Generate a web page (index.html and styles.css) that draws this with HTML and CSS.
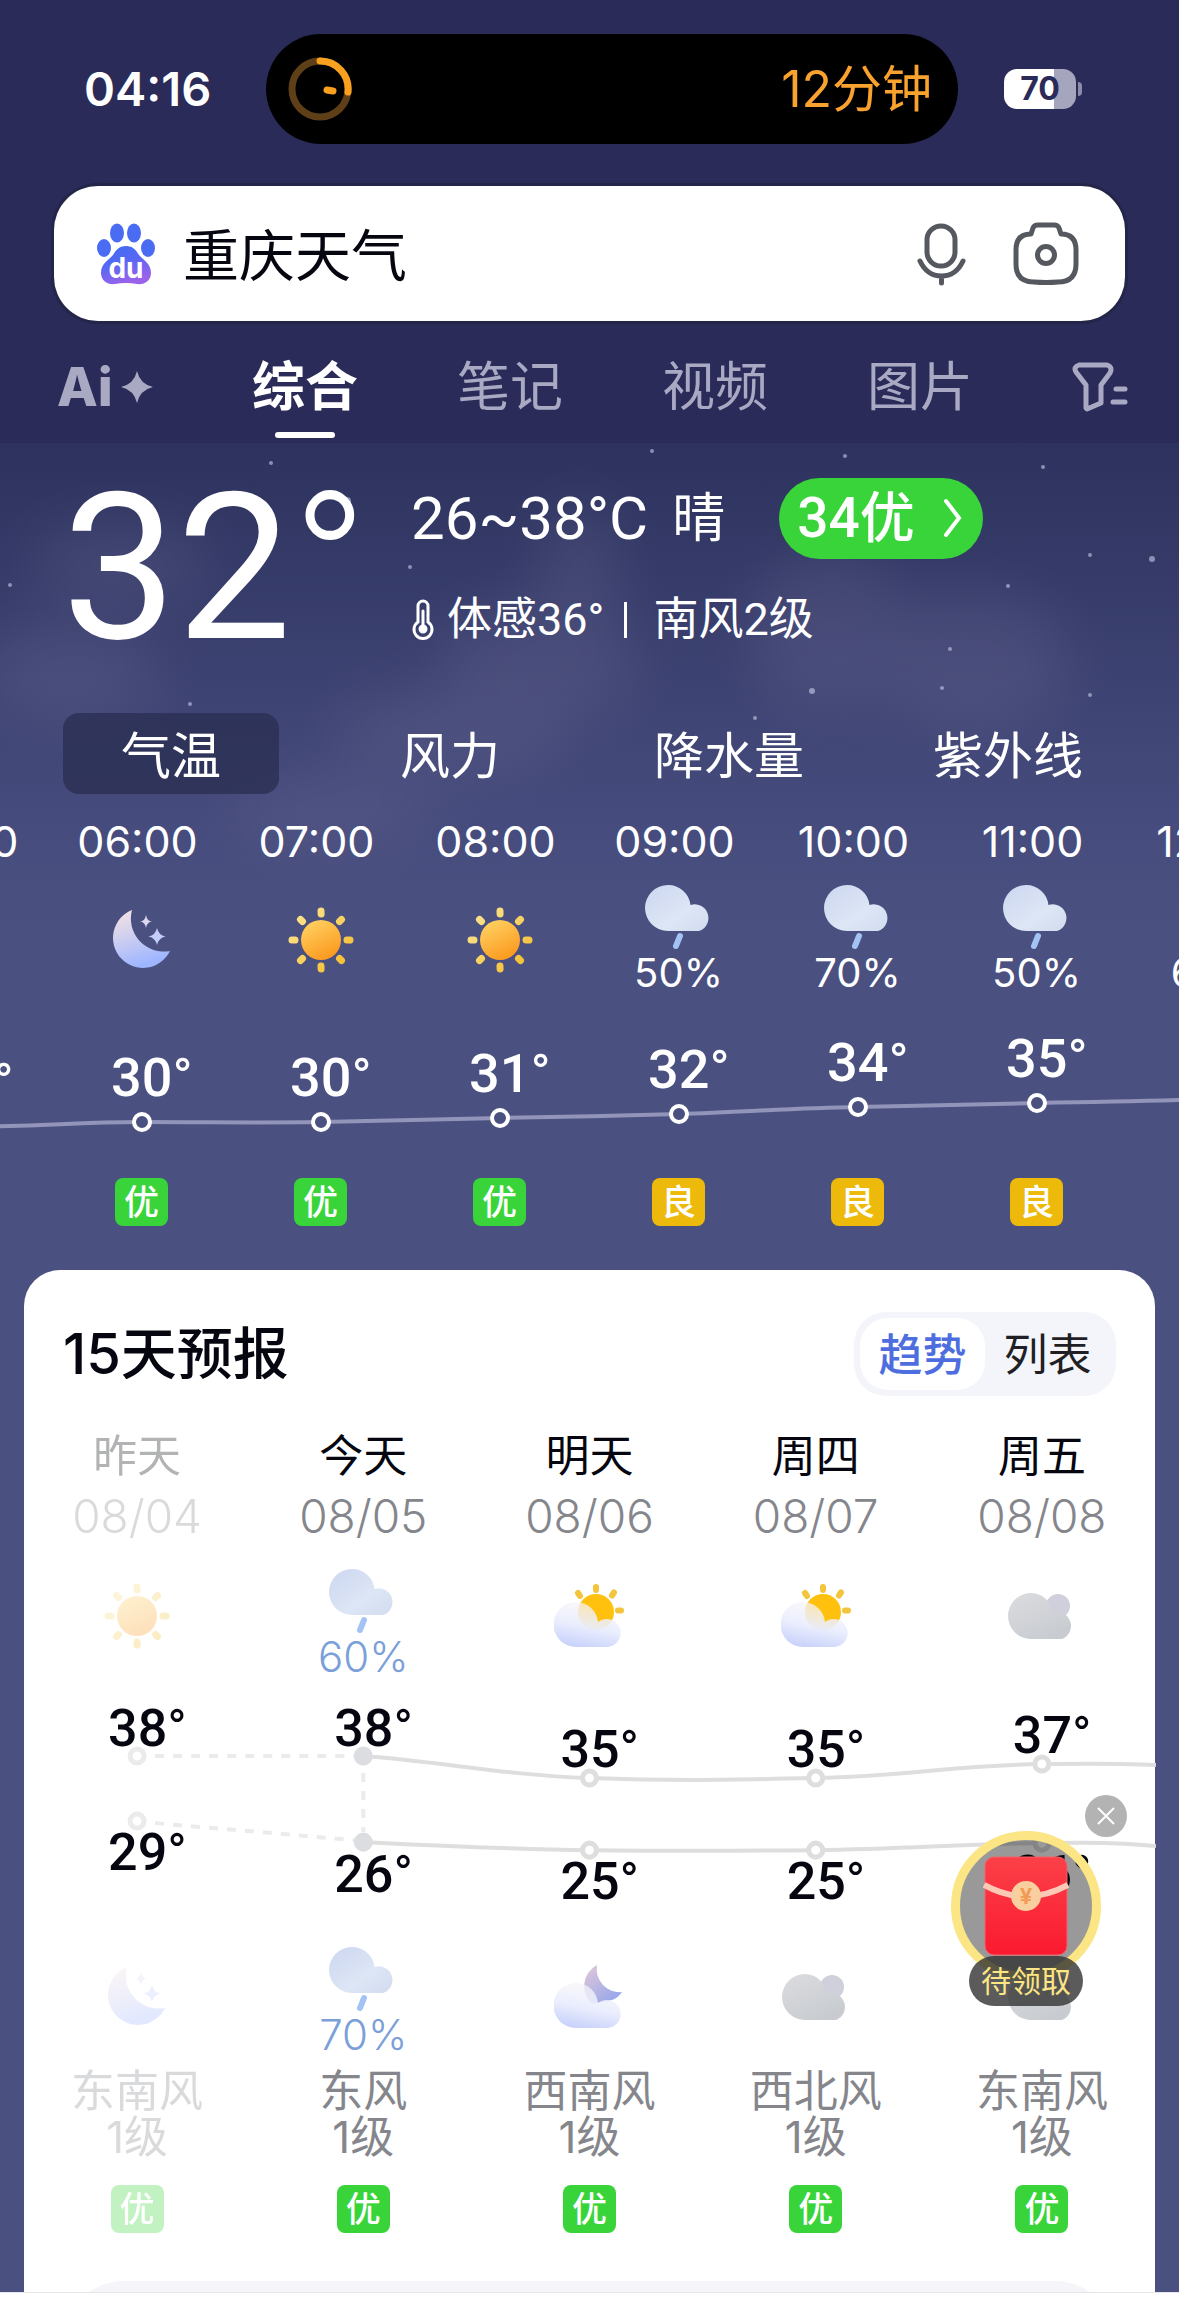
FILE: index.html
```html
<!DOCTYPE html>
<html lang="zh-CN">
<head>
    <meta charset="UTF-8">
    <meta name="viewport" content="width=device-width, initial-scale=1.0">
    <title>重庆天气</title>
    <link rel="stylesheet" href="styles.css">
</head>
<body>
    <!-- Shared weather icons -->
    <svg class="sprite" aria-hidden="true">
        <defs>
            <linearGradient id="g-sun" x1="0" y1="0" x2="0.5" y2="1"><stop offset="0" stop-color="#ffd768"/><stop offset="1" stop-color="#fb9c22"/></linearGradient>
            <linearGradient id="g-ray" x1="0" y1="0" x2="1" y2="1"><stop offset="0" stop-color="#fbe596"/><stop offset="1" stop-color="#f3bd2c"/></linearGradient>
            <linearGradient id="g-moon" x1="0" y1="0" x2="0.3" y2="1"><stop offset="0" stop-color="#f6e2e2"/><stop offset="0.45" stop-color="#d3d1ef"/><stop offset="1" stop-color="#9fb6ff"/></linearGradient>
            <linearGradient id="g-rain" x1="0" y1="0" x2="1" y2="1"><stop offset="0" stop-color="#ccd6f0"/><stop offset="0.6" stop-color="#dde6f5"/><stop offset="1" stop-color="#d3dcf0"/></linearGradient>
            <linearGradient id="g-soft" x1="0.5" y1="0" x2="0.2" y2="1"><stop offset="0" stop-color="#f7f5f8" stop-opacity="0.7"/><stop offset="0.5" stop-color="#e9edfd" stop-opacity="0.95"/><stop offset="1" stop-color="#c5cffb"/></linearGradient>
            <linearGradient id="g-gray" x1="0" y1="0" x2="0.6" y2="1"><stop offset="0" stop-color="#dcdcdf"/><stop offset="1" stop-color="#c8ccd1"/></linearGradient>
            <linearGradient id="g-dusk" x1="0" y1="0" x2="0.8" y2="1"><stop offset="0" stop-color="#e3c9d8"/><stop offset="1" stop-color="#93a5ec"/></linearGradient>
            <linearGradient id="g-paw" x1="0" y1="0" x2="0.4" y2="1"><stop offset="0" stop-color="#3f6cf3"/><stop offset="0.5" stop-color="#5668f4"/><stop offset="1" stop-color="#9a63ea"/></linearGradient>
            <linearGradient id="g-packet" x1="0" y1="0" x2="0" y2="1"><stop offset="0" stop-color="#fb4048"/><stop offset="1" stop-color="#fb1a30"/></linearGradient>
        </defs>
        <symbol id="sun" viewBox="0 0 66 66">
            <g stroke="url(#g-ray)" stroke-width="7" stroke-linecap="round">
                <path d="M33 4l.1 3M33 59l.1 3M4 33l3 .1M59 33l3 .1M12.500 12.500l2 2M51.500 51.500l2 2M53.500 12.500l-2 2M14.500 51.500l-2 2"/>
            </g>
            <circle cx="33" cy="33" r="20" fill="url(#g-sun)"/>
        </symbol>
        <symbol id="moon" viewBox="0 0 60 60">
            <path fill="url(#g-moon)" d="M20 0A30 30 0 1 0 58 41A33 33 0 0 1 20 0z"/>
            <path fill="#dcd7f0" d="M34 5q1 6 6 6.500q-5 .5-6 6.500q-1-6-6-6.500q5-.5 6-6.500z"/>
            <path fill="#c3cdfa" d="M45 18q1.500 7 8.500 8.500q-7 1.500-8.500 8.500q-1.500-7-8.500-8.500q7-1.500 8.500-8.500z"/>
        </symbol>
        <symbol id="rain" viewBox="0 0 68 66">
            <path fill="url(#g-rain)" d="M23 1a22.500 22.500 0 0 1 22.500 20A13.500 13.500 0 1 1 54 47H23A23 23 0 0 1 23 1z"/>
            <path stroke="#a3c3f5" stroke-width="6" stroke-linecap="round" d="M35 52l-4 10"/>
        </symbol>
        <symbol id="partly" viewBox="0 0 70 66">
            <g stroke="#f3c53c" stroke-width="6" stroke-linecap="round">
                <path d="M42 4v3M60 9.500l-2 3M64 27.500h3M24 10l2 3"/>
            </g>
            <circle cx="42" cy="29" r="18" fill="#ffc10e"/>
            <path fill="url(#g-soft)" d="M22 19a22 22 0 0 1 22 20A14 14 0 1 1 53 64H22A22.500 22.500 0 0 1 22 19z"/>
        </symbol>
        <symbol id="cloudmoon" viewBox="0 0 70 66">
            <path fill="url(#g-dusk)" d="M43 1A24 24 0 0 0 38 40L58 36Q65 33 68 28A23 23 0 0 1 43 1z"/>
            <path fill="url(#g-soft)" d="M22 19a22 22 0 0 1 22 20A14 14 0 1 1 53 64H22A22.500 22.500 0 0 1 22 19z"/>
        </symbol>
        <symbol id="cloudy" viewBox="0 0 68 48">
            <circle cx="50" cy="14" r="12" fill="#cfd0dc"/>
            <path fill="url(#g-gray)" d="M23 1a21 21 0 0 1 21 20A13.500 13.500 0 1 1 54 47H23A23 23 0 0 1 23 1z"/>
        </symbol>
    </svg>

    <header class="top">
        <div class="status">
            <span class="clock">04:16</span>
            <div class="island">
                <svg width="64" height="64" viewBox="0 0 64 64" fill="none" stroke-width="7">
                    <circle cx="32" cy="32" r="28" stroke="#5e3f17"/>
                    <path d="M32 4a28 28 0 0 1 28 31M39 33l6 1" stroke="#f9a01f" stroke-linecap="round"/>
                </svg>
                <span>12分钟</span>
            </div>
            <span class="battery">70</span>
        </div>

        <form class="search" role="search">
            <svg width="58" height="62" viewBox="0 0 58 62" fill="url(#g-paw)">
                <ellipse cx="20" cy="10" rx="7" ry="9.500" fill="#4a6cf3"/>
                <ellipse cx="37" cy="10" rx="7" ry="9.500" fill="#4a6cf3"/>
                <ellipse cx="7" cy="25" rx="7" ry="9" fill="#4a6cf3"/>
                <ellipse cx="51" cy="25" rx="7" ry="9" fill="#4a6cf3"/>
                <path d="M29 23c7 0 10 4 13 9c4 5 12 8 12 18c0 8-7 12-14 11c-7-1.500-15-1.500-22 0c-7 1-14-3-14-11c0-10 8-13 12-18c3-5 6-9 13-9z"/>
                <text x="29" y="55" class="paw-text">du</text>
            </svg>
            <input type="search" aria-label="搜索" value="重庆天气">
            <button type="button" aria-label="语音搜索">
                <svg width="50" height="64" viewBox="0 0 50 64" fill="none" stroke="#55585f" stroke-width="5" stroke-linecap="round">
                    <rect x="10" y="4" width="28" height="40" rx="14"/>
                    <path d="M3 39q7 15 21.500 15T46 39M24.500 54v7"/>
                </svg>
            </button>
            <button type="button" aria-label="拍照搜索">
                <svg width="66" height="64" viewBox="0 0 66 64" fill="none" stroke="#55585f" stroke-width="5" stroke-linejoin="round">
                    <path d="M18 12L20 6Q21 3 25 3H41Q45 3 46 6L48 12Q63 12 63 28V42Q63 60 45 60Q33 61 21 60Q3 60 3 42V28Q3 12 18 12z"/>
                    <circle cx="33" cy="33" r="8.500"/>
                </svg>
            </button>
        </form>

        <nav class="channels">
            <a href="#" class="ai">Ai<svg width="32" height="32" viewBox="0 0 32 32"><path fill="currentColor" d="M16 0q3 13 16 16q-13 3-16 16q-3-13-16-16q13-3 16-16z"/></svg></a>
            <a href="#" class="active">综合</a>
            <a href="#">笔记</a>
            <a href="#">视频</a>
            <a href="#">图片</a>
            <button type="button" aria-label="筛选">
                <svg width="57" height="52" viewBox="0 0 57 52" fill="none" stroke="currentColor" stroke-width="5" stroke-linecap="round" stroke-linejoin="round">
                    <path d="M7 4H35Q41 6 38 12L29 24V42L15 48L14 47V24L4 11Q1 6 7 4zM44 28h9M41 41h12"/>
                </svg>
            </button>
        </nav>
    </header>

    <main class="weather">
        <svg class="sky" viewBox="0 0 1179 460" preserveAspectRatio="xMidYMin slice" aria-hidden="true">
            <defs><filter id="haze" x="-50%" y="-50%" width="200%" height="200%"><feGaussianBlur stdDeviation="28"/></filter></defs>
            <g fill="#8a84ac" opacity="0.18" filter="url(#haze)">
                <ellipse cx="120" cy="120" rx="90" ry="40"/>
                <ellipse cx="70" cy="230" rx="90" ry="50"/>
                <ellipse cx="580" cy="130" rx="40" ry="70"/>
                <ellipse cx="540" cy="220" rx="100" ry="60"/>
                <ellipse cx="450" cy="290" rx="120" ry="40"/>
                <ellipse cx="830" cy="190" rx="80" ry="80"/>
                <ellipse cx="970" cy="220" rx="100" ry="70"/>
                <ellipse cx="330" cy="370" rx="100" ry="30"/>
            </g>
            <g fill="#c8cbe8" opacity="0.6">
                <circle cx="347" cy="58" r="4"/><circle cx="271" cy="20" r="2"/><circle cx="652" cy="8" r="2"/><circle cx="845" cy="13" r="2"/>
                <circle cx="1043" cy="24" r="2"/><circle cx="1152" cy="116" r="3"/><circle cx="1090" cy="112" r="2"/><circle cx="812" cy="248" r="3"/>
                <circle cx="950" cy="206" r="2"/><circle cx="942" cy="245" r="2"/><circle cx="1090" cy="252" r="2"/><circle cx="190" cy="261" r="2"/>
                <circle cx="410" cy="124" r="2"/><circle cx="755" cy="275" r="2"/><circle cx="10" cy="142" r="2"/><circle cx="1008" cy="143" r="2"/>
            </g>
        </svg>

        <section class="now">
            <div class="now-temp">32<span>°</span></div>
            <div class="now-info">
                <div class="summary">
                    <span class="range">26~38°C</span>
                    <span>晴</span>
                    <a href="#" class="aqi">34优<svg width="20" height="40" viewBox="0 0 20 40" fill="none" stroke="#fff" stroke-width="4" stroke-linecap="round"><path d="M3 3l13 17L3 37"/></svg></a>
                </div>
                <div class="feel">
                    <svg width="24" height="42" viewBox="0 0 24 42" fill="none" stroke="#fff" stroke-width="3" stroke-linecap="round">
                        <path d="M7 23V7a5 5 0 0 1 10 0V23a9 9 0 1 1-10 0z"/>
                        <path d="M12 12v16"/><circle cx="12" cy="30" r="3" fill="#fff"/>
                    </svg>
                    <span>体感36°</span>
                    <i></i>
                    <span>南风2级</span>
                </div>
            </div>
        </section>

        <div class="metrics">
            <button type="button" class="active">气温</button>
            <button type="button">风力</button>
            <button type="button">降水量</button>
            <button type="button">紫外线</button>
        </div>

        <section class="hourly">
            <div class="strip">
                <div class="hours">
                    <div><time>05:00</time><div class="icon"><svg width="60" height="60"><use href="#moon"/></svg></div></div>
                    <div><time>06:00</time><div class="icon"><svg width="60" height="60"><use href="#moon"/></svg></div></div>
                    <div><time>07:00</time><div class="icon"><svg width="66" height="66"><use href="#sun"/></svg></div></div>
                    <div><time>08:00</time><div class="icon"><svg width="66" height="66"><use href="#sun"/></svg></div></div>
                    <div><time>09:00</time><div class="icon"><svg width="68" height="66"><use href="#rain"/></svg><span>50%</span></div></div>
                    <div><time>10:00</time><div class="icon"><svg width="68" height="66"><use href="#rain"/></svg><span>70%</span></div></div>
                    <div><time>11:00</time><div class="icon"><svg width="68" height="66"><use href="#rain"/></svg><span>50%</span></div></div>
                    <div><time>12:00</time><div class="icon"><svg width="68" height="66"><use href="#rain"/></svg><span>60%</span></div></div>
                </div>
                <svg class="hour-chart" width="1432" height="120" viewBox="0 0 1432 120">
                    <path class="line" d="M90 97C180 96 200 92 269 92S380 93 448 92S560 89 627 88S740 86 806 84S920 78 985 77S1100 74 1164 73S1280 71 1343 69"/>
                    <g class="dots">
                        <circle cx="90" cy="97" r="8"/><circle cx="269" cy="92" r="8"/><circle cx="448" cy="92" r="8"/><circle cx="627" cy="88" r="8"/>
                        <circle cx="806" cy="84" r="8"/><circle cx="985" cy="77" r="8"/><circle cx="1164" cy="73" r="8"/><circle cx="1343" cy="69" r="8"/>
                    </g>
                    <g class="labels">
                        <text x="59" y="71">29<tspan>°</tspan></text><text x="238" y="66">30<tspan>°</tspan></text>
                        <text x="417" y="66">30<tspan>°</tspan></text><text x="596" y="62">31<tspan>°</tspan></text>
                        <text x="775" y="58">32<tspan>°</tspan></text><text x="954" y="51">34<tspan>°</tspan></text>
                        <text x="1133" y="47">35<tspan>°</tspan></text><text x="1312" y="43">36<tspan>°</tspan></text>
                    </g>
                </svg>
                <div class="hours">
                    <div><b class="tag">优</b></div>
                    <div><b class="tag">优</b></div>
                    <div><b class="tag">优</b></div>
                    <div><b class="tag">优</b></div>
                    <div><b class="tag fair">良</b></div>
                    <div><b class="tag fair">良</b></div>
                    <div><b class="tag fair">良</b></div>
                    <div><b class="tag fair">良</b></div>
                </div>
            </div>
        </section>

        <section class="card">
            <div class="card-head">
                <h2>15天预报</h2>
                <div class="switch">
                    <button type="button" class="active">趋势</button>
                    <button type="button">列表</button>
                </div>
            </div>

            <div class="days">
                <div class="past"><h3>昨天</h3><time>08/04</time><div class="icon"><svg width="66" height="66"><use href="#sun"/></svg></div></div>
                <div><h3>今天</h3><time>08/05</time><div class="icon wet"><svg width="68" height="66"><use href="#rain"/></svg><span>60%</span></div></div>
                <div><h3>明天</h3><time>08/06</time><div class="icon"><svg width="70" height="66"><use href="#partly"/></svg></div></div>
                <div><h3>周四</h3><time>08/07</time><div class="icon"><svg width="70" height="66"><use href="#partly"/></svg></div></div>
                <div><h3>周五</h3><time>08/08</time><div class="icon"><svg width="68" height="48"><use href="#cloudy"/></svg></div></div>
            </div>

            <svg class="day-chart" viewBox="0 0 1130 200">
                <path class="dashed" d="M131 56H330M131 123L330 140M339 73V132"/>
                <path class="line" d="M339 56C420 62 480 75 565 78S700 80 791 78S930 65 1017 64S1100 64 1131 65"/>
                <path class="line" d="M339 142C420 146 480 149 565 150S700 151 791 150S930 144 1017 143S1100 144 1131 146"/>
                <g class="dots">
                    <circle class="old" cx="113" cy="56" r="7"/><circle class="today" cx="339" cy="56" r="7"/><circle cx="565" cy="78" r="7"/><circle cx="791" cy="78" r="7"/><circle cx="1017" cy="64" r="7"/>
                    <circle class="old" cx="113" cy="121" r="7"/><circle class="today" cx="339" cy="142" r="7"/><circle cx="565" cy="150" r="7"/><circle cx="791" cy="150" r="7"/><circle cx="1017" cy="143" r="7"/>
                </g>
                <g class="labels">
                    <text x="84" y="46">38<tspan>°</tspan></text><text x="310" y="46">38<tspan>°</tspan></text><text x="536" y="67">35<tspan>°</tspan></text><text x="762" y="67">35<tspan>°</tspan></text><text x="988" y="53">37<tspan>°</tspan></text>
                    <text x="84" y="170">29<tspan>°</tspan></text><text x="310" y="192">26<tspan>°</tspan></text><text x="536" y="199">25<tspan>°</tspan></text><text x="762" y="199">25<tspan>°</tspan></text><text x="988" y="192">26<tspan>°</tspan></text>
                </g>
            </svg>

            <div class="days nights">
                <div class="past"><div class="icon"><svg width="60" height="60"><use href="#moon"/></svg></div><p>东南风<br>1级</p><b class="tag">优</b></div>
                <div><div class="icon wet"><svg width="68" height="66"><use href="#rain"/></svg><span>70%</span></div><p>东风<br>1级</p><b class="tag">优</b></div>
                <div><div class="icon"><svg width="70" height="66"><use href="#cloudmoon"/></svg></div><p>西南风<br>1级</p><b class="tag">优</b></div>
                <div><div class="icon"><svg width="68" height="48"><use href="#cloudy"/></svg></div><p>西北风<br>1级</p><b class="tag">优</b></div>
                <div><div class="icon"><svg width="68" height="48"><use href="#cloudy"/></svg></div><p>东南风<br>1级</p><b class="tag">优</b></div>
            </div>

            <div class="more"><div></div></div>

            <!-- Floating red packet -->
            <aside class="packet">
                <button type="button" class="close" aria-label="关闭"><svg width="18" height="18" viewBox="0 0 18 18" stroke="#fff" stroke-width="2"><path d="M1 1l16 16M17 1L1 17"/></svg></button>
                <a href="#" class="ring" aria-label="红包">
                    <svg width="86" height="100" viewBox="0 0 86 100">
                        <rect x="2" y="1" width="82" height="98" rx="9" fill="url(#g-packet)" stroke="#f0656b" stroke-width="1"/>
                        <path d="M1 29Q43 52 85 29" fill="none" stroke="#fbc9b6" stroke-width="6"/>
                        <circle cx="43" cy="40" r="15" fill="#f9cf9f"/>
                        <text x="43" y="48" class="yen">¥</text>
                    </svg>
                </a>
                <span>待领取</span>
            </aside>
        </section>
    </main>
    <footer class="bottom"></footer>
</body>
</html>
```
FILE: styles.css
```css
* {
    box-sizing: border-box;
}
body {
    margin: 0;
    background: #fff;
    color: #fff;
    font-family: Inter, "Noto Sans CJK SC", sans-serif;
    overflow-x: hidden;
}
a {
    color: inherit;
    text-decoration: none;
}
button {
    padding: 0;
    border: none;
    background: none;
    color: inherit;
    font: inherit;
    cursor: pointer;
}
svg {
    display: block;
    flex-shrink: 0;
}
h2, h3, p {
    margin: 0;
}
.sprite {
    position: absolute;
    width: 0;
    height: 0;
}

/* Status bar */
.top {
    padding-top: 34px;
    background: #2a2b58;
}
.status {
    display: grid;
    grid-template-columns: 182px 1fr 176px;
    align-items: center;
    padding: 0 45px 0 84px;
}
.clock {
    font-size: 47px;
    font-weight: 600;
    line-height: 54px;
}
.island {
    display: flex;
    align-items: center;
    justify-content: space-between;
    height: 110px;
    padding: 0 26px 0 22px;
    border-radius: 55px;
    background: #000;
    color: #f9a22e;
    font-size: 50px;
    line-height: 60px;
}
.battery {
    position: relative;
    width: 72px;
    height: 40px;
    margin-left: 46px;
    border-radius: 13px;
    background: linear-gradient(90deg, #fff 70%, #a5a5bd 70%);
    color: #2a2b58;
    font-size: 32px;
    font-weight: 700;
    line-height: 40px;
    text-align: center;
}
.battery::after {
    content: "";
    position: absolute;
    top: 13px;
    right: -6px;
    width: 4px;
    height: 14px;
    border-radius: 0 4px 4px 0;
    background: #8c8ca8;
}

/* Search box */
.search {
    display: flex;
    align-items: center;
    height: 135px;
    margin: 42px 54px 0;
    padding: 0 46px 0 43px;
    border-radius: 44px;
    background: #fff;
    box-shadow: 0 0 0 3px #242649;
}
.search input {
    flex: 1;
    min-width: 0;
    margin: 0 28px;
    padding: 4px 0 0;
    border: none;
    outline: none;
    background: none;
    color: #05060f;
    font: 56px/80px Inter, "Noto Sans CJK SC", sans-serif;
}
.search button + button {
    margin-left: 46px;
}
.paw-text {
    fill: #fff;
    font-size: 28px;
    font-weight: 700;
    text-anchor: middle;
}

/* Channel tabs */
.channels {
    display: flex;
    align-items: center;
    justify-content: space-between;
    height: 122px;
    padding: 10px 50px 0 57px;
    color: #a9a9c4;
    font-size: 53px;
    line-height: 112px;
}
.channels .active {
    position: relative;
    color: #fff;
    font-weight: 700;
}
.channels .active::after {
    content: "";
    position: absolute;
    left: 50%;
    bottom: 5px;
    width: 60px;
    height: 6px;
    margin-left: -30px;
    border-radius: 3px;
    background: #fff;
}
.channels .ai {
    display: flex;
    align-items: center;
    gap: 8px;
    font-weight: 800;
}

/* Current weather */
.weather {
    position: relative;
    background: linear-gradient(#2d325e, #454b7c 370px, #4a5080 480px);
}
.sky {
    position: absolute;
    top: 0;
    left: 0;
    width: 100%;
    height: 460px;
}
.now {
    position: relative;
    display: flex;
    height: 246px;
    padding-left: 62px;
}
.now-temp {
    width: 349px;
    font-family: Roboto, sans-serif;
    font-size: 204px;
    line-height: 252px;
}
.now-temp span {
    font-weight: 300;
}
.now-info {
    padding-top: 35px;
    font-family: Roboto, "Noto Sans CJK SC", sans-serif;
}
.summary {
    display: flex;
    align-items: center;
    gap: 24px;
    height: 81px;
    font-size: 53px;
    line-height: 76px;
}
.range {
    font-size: 60px;
}
.aqi {
    display: flex;
    align-items: center;
    justify-content: space-between;
    width: 204px;
    height: 81px;
    margin-left: 30px;
    padding: 0 20px 2px 18px;
    border-radius: 41px;
    background: #38d43a;
    font-size: 55px;
    font-weight: 500;
}
.feel {
    display: flex;
    align-items: center;
    gap: 12px;
    height: 48px;
    margin-top: 37px;
    font-size: 45px;
    line-height: 48px;
}
.feel i {
    width: 3px;
    height: 36px;
    margin: 0 14px 0 8px;
    background: #fff;
}
.metrics {
    position: relative;
    display: grid;
    grid-template-columns: repeat(4, 1fr);
    gap: 63px;
    margin-top: 24px;
    padding: 0 63px;
    font-size: 50px;
}
.metrics button {
    height: 81px;
    padding-bottom: 4px;
    border-radius: 16px;
    white-space: nowrap;
}
.metrics .active {
    background: rgba(42, 46, 82, 0.75);
}

/* Hourly */
.hourly {
    position: relative;
    margin-top: 22px;
    overflow: hidden;
}
.strip {
    width: 1432px;
    margin-left: -127px;
}
.hours {
    display: grid;
    grid-template-columns: repeat(8, 179px);
    text-align: center;
}
.hours time {
    display: block;
    padding-right: 8px;
    font-size: 43px;
    line-height: 50px;
}
.icon {
    display: flex;
    flex-direction: column;
    align-items: center;
    justify-content: center;
    height: 120px;
}
.icon span {
    font-size: 40px;
    line-height: 46px;
}
.hours .icon {
    margin-top: 14px;
}
.hour-chart {
    margin: 30px 0 28px;
}
.line {
    fill: none;
    stroke: #9294ba;
    stroke-width: 4;
}
.dots {
    fill: #4a5080;
    stroke: #fff;
    stroke-width: 4;
}
.labels {
    fill: #fff;
    font-family: Roboto, sans-serif;
    font-size: 54px;
    font-weight: 500;
}
.labels tspan {
    font-weight: 400;
}
.tag {
    display: block;
    width: 53px;
    height: 48px;
    margin: 0 auto;
    border-radius: 8px;
    background: #38d43a;
    color: #fff;
    font-size: 35px;
    font-weight: 500;
    line-height: 48px;
    text-align: center;
}
.tag.fair {
    background: #edb90b;
}

/* 15 day card */
.card {
    position: relative;
    margin: 44px 24px 0;
    padding-top: 42px;
    border-radius: 36px 36px 0 0;
    background: #fff;
    color: #05060f;
}
.card-head {
    display: flex;
    align-items: center;
    justify-content: space-between;
    padding: 0 39px;
}
.card-head h2 {
    font-size: 56px;
    font-weight: 500;
    line-height: 84px;
}
.switch {
    display: flex;
    height: 84px;
    padding: 6px;
    border-radius: 32px;
    background: #f4f5fa;
    color: #1f1f25;
    font-size: 44px;
}
.switch button {
    width: 125px;
    padding-bottom: 4px;
    border-radius: 28px;
}
.switch .active {
    background: #fff;
    color: #4e6ee0;
    font-weight: 500;
}
.days {
    display: grid;
    grid-template-columns: repeat(5, 1fr);
    margin-top: 30px;
    text-align: center;
}
.days h3 {
    font-size: 44px;
    font-weight: 400;
    line-height: 60px;
}
.days time {
    display: block;
    color: #85868c;
    font-size: 46px;
    font-weight: 300;
    line-height: 60px;
}
.days .icon {
    margin-top: 10px;
}
.days .wet {
    padding-top: 16px;
    color: #7b9fd9;
}
.days .icon span {
    font-size: 42px;
    font-weight: 300;
}
.past > * {
    opacity: 0.3;
}
.day-chart {
    width: 100%;
    margin-top: 24px;
    overflow: visible;
}
.day-chart .line, .day-chart .dots {
    stroke: #dedede;
}
.day-chart .dots {
    fill: #fff;
    stroke-width: 5;
}
.day-chart .today {
    fill: #dcdde1;
    stroke: #dcdde1;
}
.day-chart .old {
    stroke: #ebebeb;
}
.day-chart .labels {
    fill: #05060f;
    font-size: 52px;
}
.dashed {
    fill: none;
    stroke: #ebebeb;
    stroke-width: 4;
    stroke-dasharray: 9 9;
}
.nights {
    margin-top: 27px;
}
.nights .wet {
    padding-top: 10px;
}
.nights p {
    margin: 11px 0 25px;
    color: #85868c;
    font-size: 44px;
    line-height: 46px;
}
.more {
    height: 11px;
    margin: 48px 40px 0;
    overflow: hidden;
}
.more div {
    height: 120px;
    border-radius: 60px;
    background: #f5f5fa;
}

/* Red packet over the card */
.packet {
    position: absolute;
    top: 561px;
    right: 54px;
    width: 150px;
}
.ring {
    display: flex;
    align-items: center;
    justify-content: center;
    width: 150px;
    height: 150px;
    border: 9px solid #fbe584;
    border-radius: 50%;
    background: rgba(0, 0, 0, 0.4);
}
.packet span {
    position: absolute;
    top: 125px;
    left: 18px;
    width: 114px;
    border-radius: 25px;
    background: rgba(50, 50, 50, 0.8);
    color: #fbe584;
    font-size: 30px;
    line-height: 50px;
    text-align: center;
}
.close {
    position: absolute;
    top: -36px;
    right: -26px;
    display: flex;
    align-items: center;
    justify-content: center;
    width: 42px;
    height: 42px;
    border-radius: 50%;
    background: #b3b3b3;
}
.yen {
    fill: #f29a56;
    font-size: 22px;
    font-weight: 700;
    text-anchor: middle;
}
.bottom {
    height: 9px;
    border-top: 1px solid #e6e6ea;
    background: #fff;
}
```
